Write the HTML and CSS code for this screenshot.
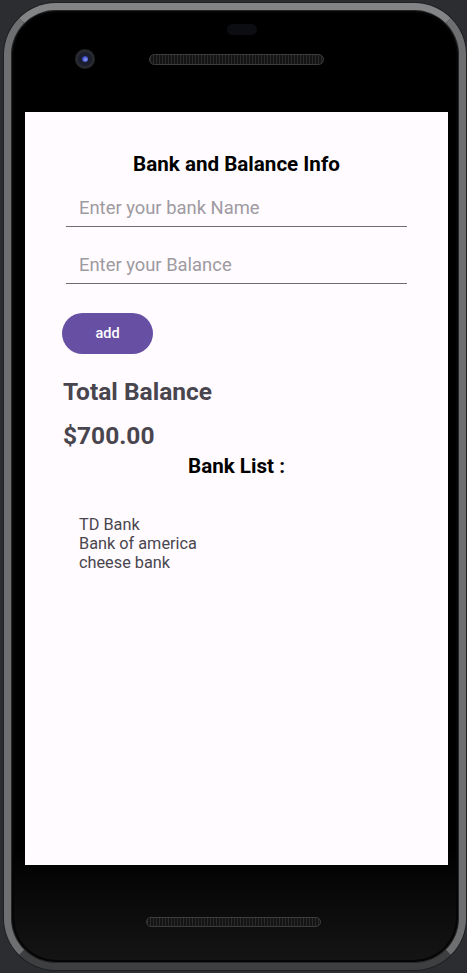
FILE: index.html
```html
<!DOCTYPE html>
<html>
<head>
<meta charset="utf-8">
<link rel="stylesheet" href="styles.css">
</head>
<body>
<div class="phone">
  <div class="top-bezel">
    <div class="earpiece"></div>
    <div class="sensor-row">
      <div class="camera"><div class="lens"></div></div>
      <div class="speaker"></div>
    </div>
  </div>
  <div class="screen">
    <h1 class="title">Bank and Balance Info</h1>
    <input class="field field-first" type="text" placeholder="Enter your bank Name">
    <input class="field field-second" type="text" placeholder="Enter your Balance">
    <button class="add-btn">add</button>
    <div class="total-label">Total Balance</div>
    <div class="total-value">$700.00</div>
    <h2 class="list-title">Bank List :</h2>
    <ul class="bank-list">
      <li>TD Bank</li>
      <li>Bank of america</li>
      <li>cheese bank</li>
    </ul>
  </div>
  <div class="bottom-bezel">
    <div class="speaker speaker-bottom"></div>
  </div>
</div>
</body>
</html>
```
FILE: styles.css
```css
html, body {
  margin: 0;
  padding: 0;
}
body {
  background: #2b2d30;
  width: 467px;
  height: 973px;
  overflow: hidden;
  font-family: Roboto, "Liberation Sans", sans-serif;
}
.phone {
  box-sizing: border-box;
  margin: 3px 1px 0 4px;
  width: 462px;
  height: 967px;
  border-radius: 52px;
  border: 7px solid #6e6f71;
  border-top-color: #838486;
  border-bottom-color: #3e3f41;
  background: linear-gradient(#000 0, #000 88%, #151515 100%);
  box-shadow: inset 0 0 0 1px #262626, inset 0 0 0 3px #050505, 0 0 0 1px #1f2022;
  display: flex;
  flex-direction: column;
}
.top-bezel {
  height: 102px;
  display: flex;
  flex-direction: column;
}
.earpiece {
  align-self: center;
  margin-top: 14px;
  margin-left: 14px;
  width: 30px;
  height: 11px;
  border-radius: 6px;
  background: #0c0d12;
}
.sensor-row {
  display: flex;
  align-items: center;
  margin-top: 14px;
  padding-left: 64px;
}
.camera {
  width: 20px;
  height: 20px;
  border-radius: 50%;
  background: radial-gradient(circle at 50% 50%, #1a1d2e 0, #1a1d2e 45%, #2a2b2e 55%, #1b1b1c 100%);
  display: flex;
  align-items: center;
  justify-content: center;
}
.lens {
  width: 6px;
  height: 6px;
  border-radius: 50%;
  background: radial-gradient(circle at 60% 60%, #8fa0ff 0, #3c4bbd 60%, #1a1f55 100%);
}
.speaker {
  box-sizing: border-box;
  margin-left: 54px;
  width: 175px;
  height: 11px;
  border-radius: 6px;
  border: 1px solid #3b3c3e;
  background:
    repeating-linear-gradient(90deg, #2a2a2a 0, #2a2a2a 1px, #141414 1px, #141414 3px),
    #1a1a1a;
}
.screen {
  margin: 0 11px 0 14px;
  height: 753px;
  background: #fffbfe;
  display: flex;
  flex-direction: column;
  padding-top: 40px;
  box-sizing: border-box;
}
.title {
  margin: 0;
  font-size: 20.6px;
  line-height: 24px;
  font-weight: 700;
  color: #000;
  text-align: center;
}
.field {
  box-sizing: border-box;
  margin: 0 41px 0 41px;
  height: 39px;
  padding: 0 0 0 13px;
  border: none;
  border-bottom: 1.3px solid #6f6b75;
  background: transparent;
  font-family: Roboto, "Liberation Sans", sans-serif;
  font-size: 18.4px;
  color: #1c1b1f;
  outline: none;
}
.field::placeholder {
  color: #9d9aa1;
}
.field-first {
  margin-top: 12px;
}
.field-second {
  margin-top: 18px;
}
.add-btn {
  align-self: flex-start;
  margin: 29px 0 0 37px;
  width: 91px;
  height: 41px;
  border: none;
  border-radius: 21px;
  background: #6750a4;
  color: #fff;
  font-family: Roboto, "Liberation Sans", sans-serif;
  font-size: 14.5px;
  font-weight: 500;
  padding: 0;
}
.total-label, .total-value {
  margin: 23px 0 0 38px;
  font-size: 24.5px;
  line-height: 30px;
  font-weight: 700;
  color: #49454f;
}
.total-value {
  margin-top: 14px;
}
.list-title {
  margin: 3px 0 0 0;
  font-size: 20.6px;
  line-height: 24px;
  font-weight: 700;
  color: #000;
  text-align: center;
}
.bank-list {
  list-style: none;
  margin: 37px 0 0 54px;
  padding: 0;
  font-size: 16.3px;
  line-height: 19px;
  color: #49454f;
}
.bottom-bezel {
  flex: 1;
  display: flex;
  flex-direction: column;
}
.speaker-bottom {
  margin-top: 52px;
  margin-left: 135px;
  height: 10px;
}
```
